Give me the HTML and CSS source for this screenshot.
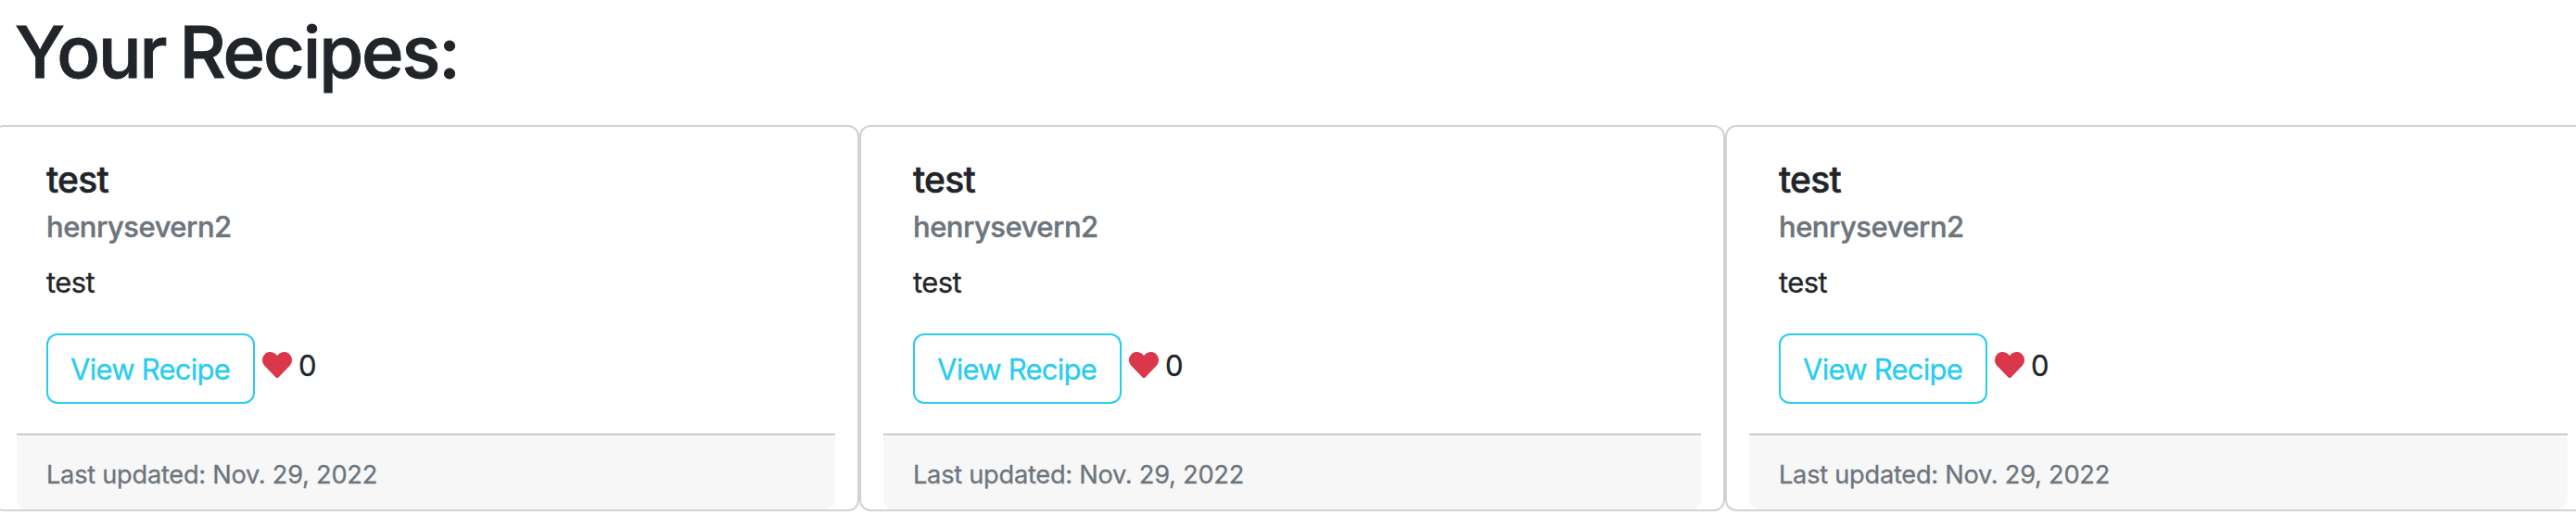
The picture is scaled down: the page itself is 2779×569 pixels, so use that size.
FILE: index.html
```html
<!DOCTYPE html>
<html lang="en">
<head>
<meta charset="utf-8">
<title>Your Recipes</title>
<link rel="stylesheet" href="styles.css">
</head>
<body>
<h1 class="page-title">Your Recipes:</h1>
<main class="recipes">
  <article class="card">
    <div class="card-body">
      <h5 class="card-title">test</h5>
      <h6 class="card-subtitle">henrysevern2</h6>
      <p class="card-text">test</p>
      <div class="actions">
        <a class="btn">View Recipe</a>
        <svg class="heart" viewBox="0 0 512 512"><path d="M462.3 62.6C407.5 15.9 326 24.3 275.7 76.2L256 96.5l-19.7-20.3C186.1 24.3 104.5 15.9 49.7 62.6c-62.8 53.6-66.1 149.8-9.9 207.9l193.5 199.8c12.5 12.9 32.8 12.9 45.3 0l193.5-199.8c56.3-58.1 53-154.3-9.8-207.9z"/></svg>
        <span class="likes">0</span>
      </div>
    </div>
    <footer class="card-footer">Last updated: Nov. 29, 2022</footer>
  </article>
  <article class="card">
    <div class="card-body">
      <h5 class="card-title">test</h5>
      <h6 class="card-subtitle">henrysevern2</h6>
      <p class="card-text">test</p>
      <div class="actions">
        <a class="btn">View Recipe</a>
        <svg class="heart" viewBox="0 0 512 512"><path d="M462.3 62.6C407.5 15.9 326 24.3 275.7 76.2L256 96.5l-19.7-20.3C186.1 24.3 104.5 15.9 49.7 62.6c-62.8 53.6-66.1 149.8-9.9 207.9l193.5 199.8c12.5 12.9 32.8 12.9 45.3 0l193.5-199.8c56.3-58.1 53-154.3-9.8-207.9z"/></svg>
        <span class="likes">0</span>
      </div>
    </div>
    <footer class="card-footer">Last updated: Nov. 29, 2022</footer>
  </article>
  <article class="card">
    <div class="card-body">
      <h5 class="card-title">test</h5>
      <h6 class="card-subtitle">henrysevern2</h6>
      <p class="card-text">test</p>
      <div class="actions">
        <a class="btn">View Recipe</a>
        <svg class="heart" viewBox="0 0 512 512"><path d="M462.3 62.6C407.5 15.9 326 24.3 275.7 76.2L256 96.5l-19.7-20.3C186.1 24.3 104.5 15.9 49.7 62.6c-62.8 53.6-66.1 149.8-9.9 207.9l193.5 199.8c12.5 12.9 32.8 12.9 45.3 0l193.5-199.8c56.3-58.1 53-154.3-9.8-207.9z"/></svg>
        <span class="likes">0</span>
      </div>
    </div>
    <footer class="card-footer">Last updated: Nov. 29, 2022</footer>
  </article>
</main>
</body>
</html>
```
FILE: styles.css
```css
* { box-sizing: border-box; }

body {
  margin: 0;
  overflow: hidden;
  background: #fff;
  color: #212529;
  font: 400 31px/48px Inter, "Liberation Sans", sans-serif;
  -webkit-text-stroke: 0.3px currentColor;
}

.page-title {
  margin: 0;
  padding: 8px 16px 31px;
  font-size: 77.6px;
  font-weight: 500;
  line-height: 96px;
  letter-spacing: -2.1px;
  word-spacing: -3.5px;
  -webkit-text-stroke-width: 0.9px;
}

/* The row is wider than the window and bleeds off both sides. */
.recipes {
  display: grid;
  grid-template-columns: 935px 934px 935px;
  margin-left: -8px;
}

.card {
  height: 417px;
  padding: 0 24px;
  border: 2px solid #d2d2d2;
  border-radius: 12px;
}

.card-body { height: 331px; padding: 33px 32px 30px; }

.card-title {
  margin: 0 0 7px;
  font-size: 39px;
  font-weight: 500;
  line-height: 48px;
  letter-spacing: -0.8px;
  -webkit-text-stroke-width: 0.5px;
}

.card-subtitle {
  margin: 0 0 17px;
  color: #6c757d;
  font-size: 31px;
  font-weight: 500;
  line-height: 39px;
  letter-spacing: -0.5px;
  -webkit-text-stroke-width: 0.4px;
}

.card-text { margin: 0 0 31px; letter-spacing: -0.6px; }

.actions { display: flex; align-items: flex-start; }

.btn {
  width: 225px;
  height: 76px;
  padding: 13px 0 11px 24px;
  border: 2px solid #29ccf1;
  border-radius: 12px;
  color: #29ccf1;
  letter-spacing: -0.75px;
  white-space: nowrap;
}

.heart {
  width: 32px;
  height: 32px;
  margin: 18px 7px 0 8px;
  fill: #da384a;
}

.likes { padding-top: 11px; }

.card-footer {
  height: 82px;
  padding: 19px 32px 13px;
  border-top: 2px solid #cbcbcb;
  border-radius: 0 0 10px 10px;
  background: #f7f7f7;
  color: #6c757d;
  font-size: 27.2px;
  letter-spacing: -0.25px;
}
```
